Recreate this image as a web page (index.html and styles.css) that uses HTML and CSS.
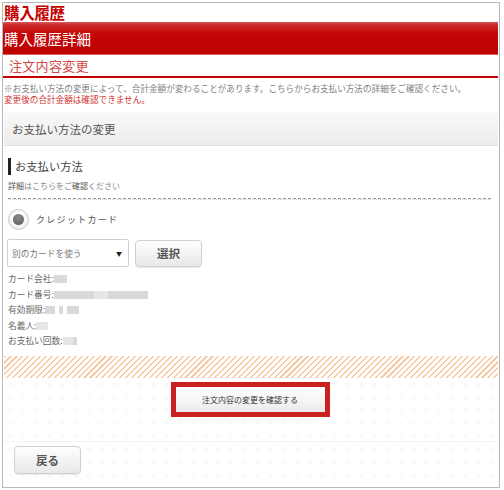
FILE: index.html
```
<!DOCTYPE html>
<html lang="ja">
<head>
<meta charset="utf-8">
<title>購入履歴</title>
<link rel="stylesheet" href="styles.css">
</head>
<body>
<div class="frame">
  <h1 class="title">購入履歴</h1>
  <div class="bar">購入履歴詳細</div>
  <div class="subhead">注文内容変更</div>
  <div class="notes">
    <p class="note-gray">※お支払い方法の変更によって、合計金額が変わることがあります。こちらからお支払い方法の詳細をご確認ください。</p>
    <p class="note-red">変更後の合計金額は確認できません。</p>
  </div>
  <div class="panel-head">お支払い方法の変更</div>
  <div class="content">
    <h2 class="method">お支払い方法</h2>
    <p class="detail"><span class="dark">詳細</span>はこちらをご<span class="dark">確認</span>ください</p>
    <div class="rule"></div>
    <label class="radio-row">
      <span class="radio"><span class="radio-dot"></span></span>
      <span class="radio-label">クレジットカード</span>
    </label>
    <div class="select-row">
      <div class="select"><span>別のカードを使う</span><span class="arrow">▼</span></div>
      <button class="btn btn-select">選択</button>
    </div>
    <ul class="card-info">
      <li>カード会社:<span class="blur w13"></span></li>
      <li>カード番号:<span class="blur w40"></span><span class="blur w14 light"></span><span class="blur w26"></span><span class="blur w14"></span></li>
      <li>有効期限:<span class="blur w10"></span><span class="blur w4 gap"></span><span class="blur w12 gap"></span></li>
      <li>名義人:<span class="blur w12 light"></span></li>
      <li>お支払い回数:<span class="blur w10 light"></span><span class="blur w4"></span></li>
    </ul>
  </div>
  <div class="stripes"></div>
  <div class="actions">
    <div class="confirm-wrap">
      <button class="btn btn-confirm">注文内容の変更を確認する</button>
    </div>
    <div class="back-row">
      <button class="btn btn-back">戻る</button>
    </div>
  </div>
</div>
</body>
</html>
```

FILE: styles.css
```
* { box-sizing: border-box; }
html, body { margin: 0; padding: 0; background: #fff; }
body { font-family: "Noto Sans CJK JP", "Noto Sans", sans-serif; color: #444; }
p, h1, h2, ul { margin: 0; padding: 0; }

.frame {
  margin: 2px 0 0 2px;
  width: 498px;
  height: 486px;
  border: 1px solid #b8b8b8;
  padding: 0 1px 0 0;
  display: flex;
  flex-direction: column;
  overflow: hidden;
}

.title {
  font-size: 15.5px;
  font-weight: bold;
  color: #c40000;
  line-height: 19px;
  height: 19px;
  padding-left: 1px;
  letter-spacing: -0.3px;
}

.bar {
  height: 33px;
  line-height: 33px;
  color: #fff;
  font-size: 14.5px;
  padding-left: 1px;
  background: linear-gradient(#d95a5a 0px, #cc2a2a 3px, #c30606 12px, #bf0000 100%);
  border-bottom: 1px solid #d76060;
}

.subhead {
  height: 23px;
  line-height: 21px;
  font-size: 13px;
  color: #d24848;
  padding-left: 6px;
  border-bottom: 2px solid #c40000;
  letter-spacing: 0.3px;
}

.notes {
  padding: 5px 0 0 1px;
  font-size: 8.6px;
  line-height: 11px;
}
.note-gray { color: #808080; white-space: nowrap; }
.note-red { color: #d03030; }

.panel-head {
  margin: 7px 0 0 1px;
  height: 34px;
  line-height: 34px;
  padding-left: 8px;
  font-size: 11.5px;
  color: #555;
  background: linear-gradient(#f9f9f9, #ececec);
  border-bottom: 1px solid #e2e2e2;
}

.content {
  padding: 0 7px 0 5px;
}

.method {
  margin-top: 12px;
  height: 17px;
  line-height: 17px;
  border-left: 3px solid #222;
  padding-left: 4px;
  font-size: 11.3px;
  font-weight: normal;
  color: #444;
}

.detail {
  margin-top: 5px;
  font-size: 8px;
  line-height: 12px;
  color: #888;
}
.detail .dark { color: #555; }

.rule {
  margin-top: 6px;
  border-top: 1px dashed #9a9a9a;
  border-bottom: 1px dotted #d0d0d0;
}

.radio-row {
  margin-top: 8px;
  display: flex;
  align-items: center;
  gap: 7px;
  height: 22px;
}
.radio {
  width: 21px;
  height: 21px;
  border-radius: 50%;
  border: 1px solid #c8c8c8;
  background: radial-gradient(circle at 50% 40%, #fff 30%, #e2e2e2 100%);
  display: flex;
  align-items: center;
  justify-content: center;
}
.radio-dot {
  width: 11px;
  height: 11px;
  border-radius: 50%;
  background: radial-gradient(circle at 50% 35%, #8a8a8a, #5a5a5a);
}
.radio-label {
  font-size: 9px;
  letter-spacing: 1.3px;
  color: #555;
}

.select-row {
  margin-top: 9px;
  display: flex;
  align-items: center;
  gap: 6px;
}
.select {
  margin-left: -1px;
  width: 122px;
  height: 28px;
  border: 1px solid #cfcfcf;
  border-radius: 2px;
  background: #fff;
  display: flex;
  align-items: center;
  justify-content: space-between;
  padding: 0 6px 0 4px;
  font-size: 8.7px;
  color: #777;
}
.select .arrow { font-size: 6px; color: #222; }

.btn {
  font-family: inherit;
  border: 1px solid #d0d0d0;
  border-radius: 4px;
  background: linear-gradient(#ffffff, #f1f1f1 60%, #e8e8e8);
  box-shadow: 0 1px 1px rgba(0,0,0,0.08);
  color: #333;
  padding: 0;
  cursor: pointer;
}
.btn-select {
  width: 67px;
  height: 27px;
  font-size: 11.5px;
  font-weight: bold;
  color: #555;
}

.card-info {
  list-style: none;
  margin-top: 4px;
  font-size: 8.7px;
  line-height: 15.5px;
  color: #666;
}
.blur {
  display: inline-block;
  height: 8px;
  vertical-align: -1px;
  background: #d9d9d9;
  filter: blur(0.6px);
}
.blur.light { background: #e6e6e6; }
.blur.gap { margin-left: 4px; }
.w4 { width: 4px; }
.w10 { width: 10px; }
.w12 { width: 12px; }
.w13 { width: 13px; }
.w14 { width: 14px; }
.w26 { width: 26px; }
.w40 { width: 40px; }

.stripes {
  margin: 7px 0 0 1px;
  height: 22px;
  background: repeating-linear-gradient(135deg, #f6cba6 0 1.5px, #fff 1.5px 4.2px);
}

.actions {
  flex: 1;
  margin-left: 1px;
  display: flex;
  flex-direction: column;
  background-color: #fff;
  background-image: radial-gradient(circle, #fafafa 2px, transparent 2.6px);
  background-size: 13px 13px;
}
.confirm-wrap {
  display: flex;
  justify-content: center;
  padding-top: 4px;
  padding-right: 2px;
  height: 64px;
  border-bottom: 1px solid #f3f3f3;
}
.btn-confirm {
  width: 159px;
  height: 35px;
  border: 5px solid #cc2020;
  border-radius: 0;
  font-size: 8px;
  color: #333;
  background: linear-gradient(#ffffff, #f4f4f4 60%, #e9e9e9);
  box-shadow: none;
}
.back-row {
  padding: 4px 0 0 10px;
}
.btn-back {
  width: 67px;
  height: 28px;
  font-size: 11.5px;
  color: #555;
  font-weight: bold;
}
```
